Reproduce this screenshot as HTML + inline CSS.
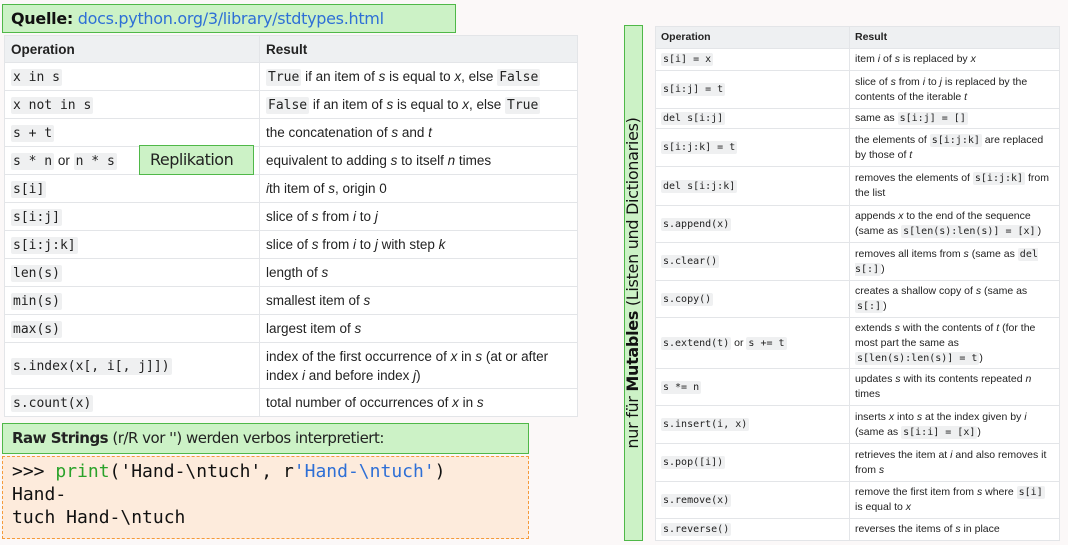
<!DOCTYPE html>
<html><head><meta charset="utf-8"><style>
*{margin:0;padding:0;box-sizing:border-box}
body{width:1068px;height:545px;background:#fbf8f8;position:relative;overflow:hidden;font-family:"Liberation Sans",sans-serif;color:#222}
.abs{position:absolute}
code{font-family:"DejaVu Sans Mono",monospace;background:#eff0f1;padding:1px 2px;border-radius:2px;color:#222}
table{border-collapse:collapse;background:#fff;position:absolute;table-layout:fixed}
td,th{border:1px solid #e3e5e8;text-align:left;vertical-align:middle}
th{background:#eef0f2;font-weight:bold}
#lt{left:4px;top:35px;width:574px;font-size:13.5px}
#lt td,#lt th{padding:0 6px}
#lt code{font-size:13px}
#rt{left:655px;top:26px;width:405px;font-size:10.5px;line-height:15px}
#rt td,#rt th{padding:0 5px}
#rt code{font-size:10px}
.green{background:#ccf2c6;border:1px solid #4fb848}
</style></head><body>
<div class="abs green" style="left:2px;top:4px;width:454px;height:29px;font-family:'DejaVu Sans',sans-serif;font-size:16px;padding:4px 8px;letter-spacing:-0.3px"><b style="color:#111">Quelle:</b> <span style="color:#2e6fd6">docs.python.org/3/library/stdtypes.html</span></div>
<table id="lt">
<colgroup><col style="width:255px"><col></colgroup>
<tr style="height:27px"><th>Operation</th><th>Result</th></tr>
<tr style="height:28px"><td><code>x in s</code></td><td><code>True</code> if an item of <i>s</i> is equal to <i>x</i>, else <code>False</code></td></tr>
<tr style="height:28px"><td><code>x not in s</code></td><td><code>False</code> if an item of <i>s</i> is equal to <i>x</i>, else <code>True</code></td></tr>
<tr style="height:28px"><td><code>s + t</code></td><td>the concatenation of <i>s</i> and <i>t</i></td></tr>
<tr style="height:28px"><td><code>s * n</code> or <code>n * s</code></td><td>equivalent to adding <i>s</i> to itself <i>n</i> times</td></tr>
<tr style="height:28px"><td><code>s[i]</code></td><td><i>i</i>th item of <i>s</i>, origin 0</td></tr>
<tr style="height:28px"><td><code>s[i:j]</code></td><td>slice of <i>s</i> from <i>i</i> to <i>j</i></td></tr>
<tr style="height:28px"><td><code>s[i:j:k]</code></td><td>slice of <i>s</i> from <i>i</i> to <i>j</i> with step <i>k</i></td></tr>
<tr style="height:28px"><td><code>len(s)</code></td><td>length of <i>s</i></td></tr>
<tr style="height:28px"><td><code>min(s)</code></td><td>smallest item of <i>s</i></td></tr>
<tr style="height:28px"><td><code>max(s)</code></td><td>largest item of <i>s</i></td></tr>
<tr style="height:46px"><td><code>s.index(x[, i[, j]])</code></td><td style="line-height:19px">index of the first occurrence of <i>x</i> in <i>s</i> (at or after index <i>i</i> and before index <i>j</i>)</td></tr>
<tr style="height:28px"><td><code>s.count(x)</code></td><td>total number of occurrences of <i>x</i> in <i>s</i></td></tr>
</table>
<div class="abs green" style="left:139px;top:145px;width:115px;height:30px;font-family:'DejaVu Sans',sans-serif;font-size:16px;padding:4px 10px;letter-spacing:-0.5px">Replikation</div>
<div class="abs green" style="left:2px;top:423px;width:527px;height:31px;font-family:'DejaVu Sans',sans-serif;font-size:15px;padding:5px 9px;letter-spacing:-0.5px"><b>Raw Strings</b> (r/R vor '') werden verbos interpretiert:</div>
<div class="abs" style="left:2px;top:456px;width:527px;height:83px;background:#fdebdc;border:1px dashed #f59a3b;font-family:'DejaVu Sans Mono',monospace;font-size:18px;line-height:23px;padding:3px 9px;white-space:pre;color:#111">&gt;&gt;&gt; <span style="color:#2aa22a">print</span>('Hand-\ntuch', r<span style="color:#2e6fd6">'Hand-\ntuch'</span>)
Hand-
tuch Hand-\ntuch</div>
<div class="abs green" style="left:624px;top:25px;width:19px;height:516px"></div>
<div class="abs" style="left:633px;top:283px;width:0;height:0"><div style="position:absolute;left:-260px;top:-11px;width:520px;height:22px;transform:rotate(-90deg);text-align:center;font-family:'DejaVu Sans',sans-serif;font-size:16px;line-height:22px;white-space:nowrap;letter-spacing:-0.3px;color:#111">nur für <b>Mutables</b> (Listen und Dictionaries)</div></div>
<table id="rt">
<colgroup><col style="width:194px"><col></colgroup>
<tr style="height:22px"><th>Operation</th><th>Result</th></tr>
<tr style="height:22px"><td><code>s[i] = x</code></td><td>item <i>i</i> of <i>s</i> is replaced by <i>x</i></td></tr>
<tr style="height:38px"><td><code>s[i:j] = t</code></td><td>slice of <i>s</i> from <i>i</i> to <i>j</i> is replaced by the contents of the iterable <i>t</i></td></tr>
<tr style="height:20px"><td><code>del s[i:j]</code></td><td>same as <code>s[i:j] = []</code></td></tr>
<tr style="height:38px"><td><code>s[i:j:k] = t</code></td><td>the elements of <code>s[i:j:k]</code> are replaced by those of <i>t</i></td></tr>
<tr style="height:39px"><td><code>del s[i:j:k]</code></td><td>removes the elements of <code>s[i:j:k]</code> from the list</td></tr>
<tr style="height:37px"><td><code>s.append(x)</code></td><td>appends <i>x</i> to the end of the sequence (same as <code>s[len(s):len(s)] = [x]</code>)</td></tr>
<tr style="height:38px"><td><code>s.clear()</code></td><td>removes all items from <i>s</i> (same as <code>del s[:]</code>)</td></tr>
<tr style="height:37px"><td><code>s.copy()</code></td><td>creates a shallow copy of <i>s</i> (same as <code>s[:]</code>)</td></tr>
<tr style="height:51px"><td><code>s.extend(t)</code> or <code>s += t</code></td><td>extends <i>s</i> with the contents of <i>t</i> (for the most part the same as <code>s[len(s):len(s)] = t</code>)</td></tr>
<tr style="height:37px"><td><code>s *= n</code></td><td>updates <i>s</i> with its contents repeated <i>n</i> times</td></tr>
<tr style="height:38px"><td><code>s.insert(i, x)</code></td><td>inserts <i>x</i> into <i>s</i> at the index given by <i>i</i> (same as <code>s[i:i] = [x]</code>)</td></tr>
<tr style="height:38px"><td><code>s.pop([i])</code></td><td>retrieves the item at <i>i</i> and also removes it from <i>s</i></td></tr>
<tr style="height:37px"><td><code>s.remove(x)</code></td><td>remove the first item from <i>s</i> where <code>s[i]</code> is equal to <i>x</i></td></tr>
<tr style="height:22px"><td><code>s.reverse()</code></td><td>reverses the items of <i>s</i> in place</td></tr>
</table>
</body></html>
